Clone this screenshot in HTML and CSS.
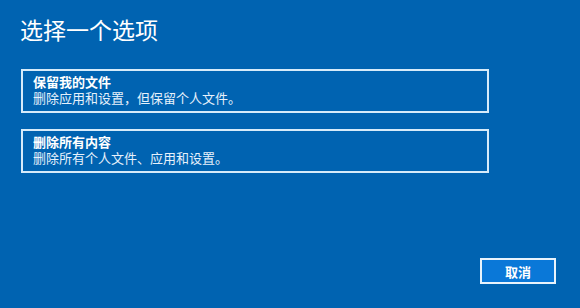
FILE: index.html
```html
<!DOCTYPE html>
<html lang="zh-CN">
<head>
  <meta charset="UTF-8" />
  <title>选择一个选项</title>
  <link rel="stylesheet" href="styles.css">
</head>
<body>
  <div class="page">
    <h1 class="title">选择一个选项</h1>
    <div class="options">
      <div class="option">
        <div class="option-name">保留我的文件</div>
        <div class="option-desc">删除应用和设置，但保留个人文件。</div>
      </div>
      <div class="option">
        <div class="option-name">删除所有内容</div>
        <div class="option-desc">删除所有个人文件、应用和设置。</div>
      </div>
    </div>
    <div class="footer">
      <button class="btn">取消</button>
    </div>
  </div>
</body>
</html>
```

FILE: styles.css
```css
body {
  margin: 0;
  background: #0063b1;
  color: #ffffff;
  font-family: "Noto Sans CJK SC", "Noto Sans", sans-serif;
  overflow: hidden;
}
.page {
  height: 308px;
  box-sizing: border-box;
  padding: 0 24px 24px 21px;
  display: flex;
  flex-direction: column;
}
.title {
  margin: 14px 0 0 -1px;
  font-size: 23px;
  font-weight: normal;
  line-height: 30px;
}
.options {
  margin-top: 25px;
  display: flex;
  flex-direction: column;
  gap: 16px;
}
.option {
  width: 468px;
  height: 44px;
  box-sizing: border-box;
  border: 2px solid #d6ebfa;
  padding: 3px 10px 0;
}
.option-name {
  font-size: 13px;
  font-weight: bold;
  line-height: 16px;
}
.option-desc {
  font-size: 13px;
  line-height: 16px;
  color: #e6f1fb;
}
.footer {
  margin-top: auto;
  display: flex;
  justify-content: flex-end;
}
.btn {
  width: 76px;
  height: 26px;
  background: #0a78d8;
  border: 2px solid #e8f3fc;
  color: #ffffff;
  font-family: inherit;
  font-size: 13px;
  font-weight: bold;
  padding: 0;
}
```
